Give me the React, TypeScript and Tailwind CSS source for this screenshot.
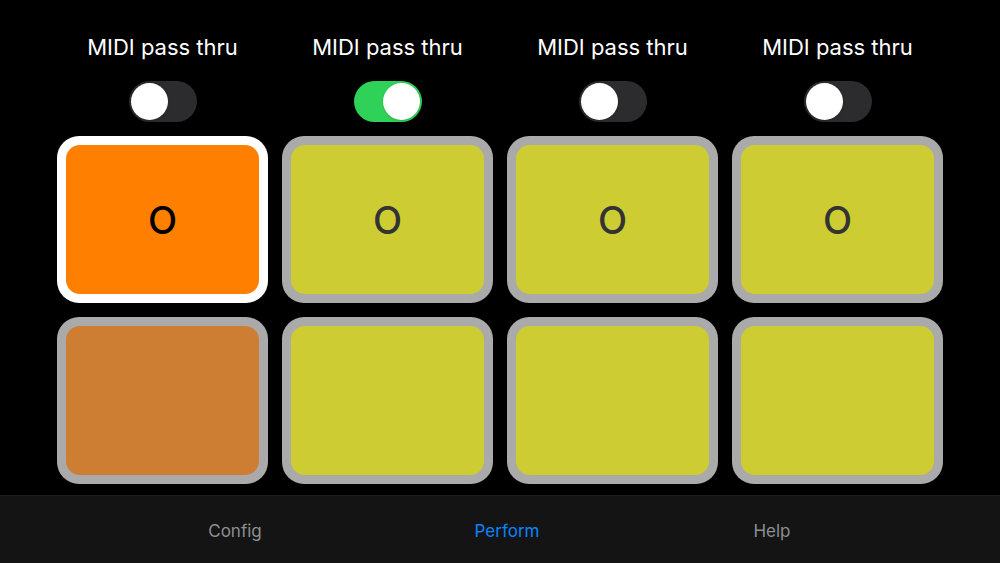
import React, { useState } from "react";

type Pad = { color: string; label?: string; selected?: boolean; text?: string };

const topPads: Pad[] = [
  { color: "bg-[#ff8000]", label: "O", selected: true, text: "text-black" },
  { color: "bg-[#cdcd33]", label: "O", text: "text-[#333333]" },
  { color: "bg-[#cdcd33]", label: "O", text: "text-[#333333]" },
  { color: "bg-[#cdcd33]", label: "O", text: "text-[#333333]" },
];

const bottomPads: Pad[] = [
  { color: "bg-[#cd7e33]" },
  { color: "bg-[#cdcd33]" },
  { color: "bg-[#cdcd33]" },
  { color: "bg-[#cdcd33]" },
];

const Toggle: React.FC<{ on: boolean; onChange: () => void }> = ({ on, onChange }) => (
  <button
    onClick={onChange}
    className={`block relative w-[68px] h-[41px] rounded-full ${on ? "bg-[#30d158]" : "bg-[#2c2c2e]"}`}
  >
    <span
      className={`absolute top-[2px] w-[37px] h-[37px] rounded-full bg-white shadow ${on ? "left-[29px]" : "left-[2px]"}`}
    />
  </button>
);

const PadCell: React.FC<{ pad: Pad }> = ({ pad }) => (
  <div
    className={`w-[211px] h-[167px] rounded-[22px] px-[9px] py-[9px] ${pad.selected ? "bg-white" : "bg-[#aaaaaa]"}`}
  >
    <div
      className={`w-full h-full rounded-[14px] flex items-center justify-center ${pad.color}`}
    >
      {pad.label && (
        <span className={`text-[38px] font-medium leading-none ${pad.text}`}>{pad.label}</span>
      )}
    </div>
  </div>
);

export default function App() {
  const [thru, setThru] = useState([false, true, false, false]);

  return (
    <div
      className="w-[1000px] h-[563px] bg-black flex flex-col overflow-hidden"
      style={{ fontFamily: "Inter, 'Liberation Sans', sans-serif" }}
    >
      <div className="flex-1 flex flex-col pt-[33px] px-[57px]">
        <div className="flex gap-[14px]">
          {thru.map((on, i) => (
            <div key={i} className="w-[211px] flex flex-col items-center">
              <div className="h-[28px] text-[22px] leading-[28px] text-white">MIDI pass thru</div>
              <div className="mt-[20px] flex">
                <Toggle
                  on={on}
                  onChange={() => setThru(thru.map((v, j) => (j === i ? !v : v)))}
                />
              </div>
            </div>
          ))}
        </div>
        <div className="mt-[14px] flex gap-[14px]">
          {topPads.map((p, i) => (
            <PadCell key={i} pad={p} />
          ))}
        </div>
        <div className="mt-[14px] flex gap-[14px]">
          {bottomPads.map((p, i) => (
            <PadCell key={i} pad={p} />
          ))}
        </div>
      </div>
      <div className="h-[68px] bg-[#141414] border-t border-[#1e1e1e] flex items-center pt-[4px] pl-[99px] text-[17px]">
        <div className="w-[272px] text-center text-[#8e8e93]">Config</div>
        <div className="w-[272px] text-center text-[#0a84ff]">Perform</div>
        <div className="w-[258px] text-center text-[#8e8e93]">Help</div>
      </div>
    </div>
  );
}
